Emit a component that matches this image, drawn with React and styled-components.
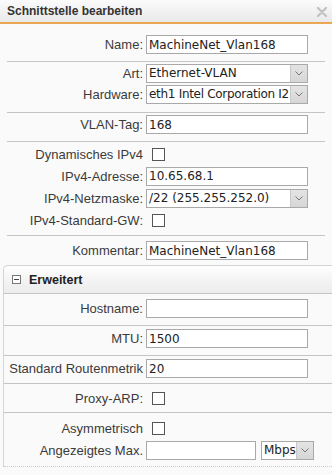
import React from 'react'
import styled, { createGlobalStyle } from 'styled-components'

const GlobalStyle = createGlobalStyle`
  html, body {
    margin: 0;
    padding: 0;
    background: #fafafa;
  }
  body {
    font-family: "Liberation Sans", Arial, sans-serif;
    color: #333;
  }
`

const Dialog = styled.div`
  width: 332px;
  height: 475px;
  overflow: hidden;
  background: #fafafa;
`

const TitleBar = styled.div`
  height: 22px;
  display: flex;
  align-items: center;
  justify-content: space-between;
  padding: 0 5px 0 7px;
  background: linear-gradient(#fbfbfb, #e9e9e9);
  border-bottom: 2px solid #eba854;
  font-size: 12px;
  font-weight: bold;
  color: #333;
`

const Close = styled.svg`
  width: 10px;
  height: 10px;
  margin-top: 1px;
`

const Body = styled.div`
  padding: 0 7px;
`

const Group = styled.div`
  padding: ${p => p.$pad || '1px 0 6px'};
  border-bottom: ${p => (p.$dotted ? '1px dotted #ccc' : p.$last ? 'none' : '1px solid #c4c4c4')};
`

const Row = styled.div`
  display: grid;
  grid-template-columns: ${p => p.$label || 136}px auto;
  column-gap: 3px;
  align-items: center;
  height: ${p => p.$h || 21}px;
`

const Label = styled.label`
  text-align: right;
  font-size: 13px;
  color: #3a3a3a;
  white-space: nowrap;
`

const Controls = styled.div`
  display: flex;
  align-items: center;
  gap: 5px;
`

const Input = styled.input`
  box-sizing: border-box;
  width: ${p => p.$w || 162}px;
  height: 19px;
  border: 1px solid #a9a9a9;
  background: #fff;
  padding: 0 2px;
  font-family: "DejaVu Sans", Tahoma, sans-serif;
  font-size: 12px;
  color: #222;
  outline: none;
`

const SelectBox = styled.div`
  box-sizing: border-box;
  width: ${p => p.$w || 162}px;
  height: 19px;
  display: flex;
  border: 1px solid #a9a9a9;
  background: #fff;
`

const SelectValue = styled.span`
  flex: 1;
  min-width: 0;
  overflow: hidden;
  white-space: nowrap;
  padding: 0 0 0 2px;
  line-height: 17px;
  font-family: "DejaVu Sans", Tahoma, sans-serif;
  font-size: 12px;
  letter-spacing: ${p => (p.$tight ? '-0.3px' : '0')};
  color: #222;
`

const SelectButton = styled.span`
  width: 16px;
  flex: none;
  display: flex;
  align-items: center;
  justify-content: center;
  background: linear-gradient(#e4e4e4, #d6d6d6);
  border-left: 1px solid #c8c8c8;
`

const Check = styled.span`
  box-sizing: border-box;
  width: 13px;
  height: 13px;
  margin-left: 6px;
  border: 1px solid #555;
  background: #fff;
`

const Section = styled.div`
  margin: 4px 0 0 3px;
  border-left: 1px solid #d4d4d4;
  border-top: 1px solid #d4d4d4;
  border-top-left-radius: 5px;
`

const SectionHeader = styled.div`
  height: 27px;
  display: flex;
  align-items: center;
  gap: 8px;
  padding-left: 8px;
  border-top-left-radius: 5px;
  background: linear-gradient(#ffffff, #f3f3f3 55%, #ececec);
  border-bottom: 1px solid #c4c4c4;
  font-size: 12.5px;
  font-weight: bold;
  color: #222;
`

const Toggle = styled.span`
  box-sizing: border-box;
  width: 9px;
  height: 9px;
  border: 1px solid #777;
  background: #fff;
  display: flex;
  align-items: center;
  justify-content: center;
  &::after {
    content: '';
    width: 5px;
    height: 1px;
    background: #444;
  }
`

const Chevron = () => (
  <svg width="8" height="5" viewBox="0 0 8 5">
    <path d="M0.5 0.5 L4 4 L7.5 0.5" fill="none" stroke="#777" strokeWidth="1" />
  </svg>
)

const Select = ({ value, w, tight }) => (
  <SelectBox $w={w}>
    <SelectValue $tight={tight}>{value}</SelectValue>
    <SelectButton>
      <Chevron />
    </SelectButton>
  </SelectBox>
)

const Field = ({ label, children, h, lw }) => (
  <Row $h={h} $label={lw}>
    <Label>{label}</Label>
    <Controls>{children}</Controls>
  </Row>
)

const App = () => {
  return (
    <>
      <GlobalStyle />
      <Dialog>
        <TitleBar>
          <span>Schnittstelle bearbeiten</span>
          <Close viewBox="0 0 10 10">
            <path d="M1 1 L9 9 M9 1 L1 9" stroke="#c2c2c2" strokeWidth="2.4" strokeLinecap="round" />
          </Close>
        </TitleBar>
        <Body>
          <Group $pad="10px 0 6px">
            <Field label="Name:">
              <Input defaultValue="MachineNet_Vlan168" />
            </Field>
          </Group>
          <Group $pad="1px 0 7px">
            <Field label="Art:">
              <Select value="Ethernet-VLAN" />
            </Field>
            <Field label="Hardware:">
              <Select value="eth1 Intel Corporation I2" tight />
            </Field>
          </Group>
          <Group $pad="1px 0 6px">
            <Field label="VLAN-Tag:">
              <Input defaultValue="168" />
            </Field>
          </Group>
          <Group $pad="1px 0 4px">
            <Field label="Dynamisches IPv4" h={22}>
              <Check />
            </Field>
            <Field label="IPv4-Adresse:" h={22}>
              <Input defaultValue="10.65.68.1" />
            </Field>
            <Field label="IPv4-Netzmaske:" h={22}>
              <Select value="/22 (255.255.252.0)" />
            </Field>
            <Field label="IPv4-Standard-GW:" h={22}>
              <Check />
            </Field>
          </Group>
          <Group $pad="4px 0 0" $last>
            <Field label="Kommentar:">
              <Input defaultValue="MachineNet_Vlan168" />
            </Field>
          </Group>
        </Body>
        <Section>
          <SectionHeader>
            <Toggle />
            <span>Erweitert</span>
          </SectionHeader>
          <Group $pad="4px 0 6px">
            <Field label="Hostname:" lw={139}>
              <Input />
            </Field>
          </Group>
          <Group $pad="2px 0 6px">
            <Field label="MTU:" lw={139}>
              <Input defaultValue="1500" />
            </Field>
          </Group>
          <Group $pad="2px 0 4px">
            <Field label="Standard Routenmetrik" lw={139}>
              <Input defaultValue="20" />
            </Field>
          </Group>
          <Group $pad="4px 0 3px">
            <Field label="Proxy-ARP:" lw={139}>
              <Check />
            </Field>
          </Group>
          <Group $pad="4px 0 5px" $dotted>
            <Field label="Asymmetrisch" lw={139} h={22}>
              <Check />
            </Field>
            <Field label="Angezeigtes Max." lw={139} h={22}>
              <Input $w={110} />
              <Select value="Mbps" w={53} />
            </Field>
          </Group>
        </Section>
      </Dialog>
    </>
  )
}

export default App
